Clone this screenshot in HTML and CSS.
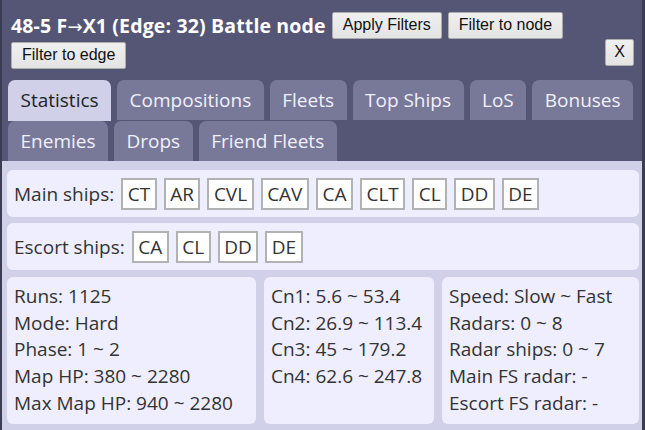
FILE: index.html
```html
<!DOCTYPE html>
<html>
<head>
<meta charset="utf-8">
<link rel="stylesheet" href="styles.css">
</head>
<body>
<div class="panel">
  <div class="header">
    <div class="row1">
      <span class="title">48-5 F<span class="arrow">→</span>X1 (Edge: 32) Battle node</span>
      <button class="btn">Apply Filters</button>
      <button class="btn">Filter to node</button>
    </div>
    <div class="row2">
      <button class="btn">Filter to edge</button>
      <button class="btn close">X</button>
    </div>
  </div>
  <div class="tabs">
    <div class="tab active">Statistics</div>
    <div class="tab">Compositions</div>
    <div class="tab">Fleets</div>
    <div class="tab">Top Ships</div>
    <div class="tab">LoS</div>
    <div class="tab">Bonuses</div>
    <div class="tab">Enemies</div>
    <div class="tab">Drops</div>
    <div class="tab">Friend Fleets</div>
  </div>
  <div class="content">
    <div class="card ships">
      <span class="label">Main ships:</span>
      <span class="ship">CT</span><span class="ship">AR</span><span class="ship">CVL</span><span class="ship">CAV</span><span class="ship">CA</span><span class="ship">CLT</span><span class="ship">CL</span><span class="ship">DD</span><span class="ship">DE</span>
    </div>
    <div class="card ships">
      <span class="label">Escort ships:</span>
      <span class="ship">CA</span><span class="ship">CL</span><span class="ship">DD</span><span class="ship">DE</span>
    </div>
    <div class="stats">
      <div class="card stat c1">
        <div>Runs: 1125</div>
        <div>Mode: Hard</div>
        <div>Phase: 1 ~ 2</div>
        <div>Map HP: 380 ~ 2280</div>
        <div>Max Map HP: 940 ~ 2280</div>
      </div>
      <div class="card stat c2">
        <div>Cn1: 5.6 ~ 53.4</div>
        <div>Cn2: 26.9 ~ 113.4</div>
        <div>Cn3: 45 ~ 179.2</div>
        <div>Cn4: 62.6 ~ 247.8</div>
      </div>
      <div class="card stat c3">
        <div>Speed: Slow ~ Fast</div>
        <div>Radars: 0 ~ 8</div>
        <div>Radar ships: 0 ~ 7</div>
        <div>Main FS radar: -</div>
        <div>Escort FS radar: -</div>
      </div>
    </div>
  </div>
</div>
</body>
</html>
```
FILE: styles.css
```css
html, body {
  margin: 0;
  padding: 0;
  background: #3c3c52;
  overflow: hidden;
}
.panel {
  margin-left: 2px;
  width: 640px;
  height: 430px;
  background: #555575;
  font-family: "Open Sans", "Noto Sans", sans-serif;
}
.header {
  padding: 12px 0 0 9px;
  width: 623px;
}
.row1 {
  display: flex;
  align-items: center;
  gap: 6px;
}
.title {
  color: #ffffff;
  font-weight: bold;
  font-size: 19.5px;
  letter-spacing: 0.15px;
}
.arrow {
  font-family: "DejaVu Sans", sans-serif;
  font-weight: normal;
  font-size: 18px;
}
.row2 {
  display: flex;
  justify-content: space-between;
  align-items: flex-start;
  margin-top: 3px;
}
.btn {
  font-family: "Liberation Sans", Arial, sans-serif;
  font-size: 16px;
  color: #111;
  background: linear-gradient(#f0f0f0, #e3e3e3);
  border: 1px solid #adadad;
  border-radius: 2px;
  padding: 3px 10px 4px;
  height: 27px;
  line-height: 18px;
}
.close {
  margin-top: -3px;
  padding: 3px 8px 4px;
}
.tabs {
  display: flex;
  flex-wrap: wrap;
  gap: 1px 6px;
  padding: 11px 0 0 6px;
  width: 630px;
}
.tab {
  background: #787898;
  color: #f0f0ff;
  font-size: 19px;
  height: 40px;
  line-height: 40px;
  padding: 0 12.5px;
  border-radius: 7px 7px 0 0;
  box-sizing: border-box;
}
.tab.active {
  background: #d0d0e8;
  color: #222;
  height: 41px;
  margin-bottom: -1px;
}
.content {
  background: #d0d0e8;
  padding: 9px 3px 6px 5px;
  display: flex;
  flex-direction: column;
  gap: 6px;
  height: 270px;
  box-sizing: border-box;
  color: #333;
  font-size: 19px;
}
.card {
  background: #eeeefe;
  border-radius: 6px;
}
.ships {
  display: flex;
  align-items: center;
  gap: 7px;
  padding: 7px 7px 7px 7px;
  height: 47px;
  box-sizing: border-box;
}
.ship {
  background: #ffffff;
  border: 2px solid #b2b2b2;
  padding: 0 4.5px;
  height: 32px;
  line-height: 28px;
  box-sizing: border-box;
}
.stats {
  display: flex;
  gap: 8px;
  margin-top: 1px;
}
.stat {
  padding: 6px 7px;
  line-height: 26.7px;
  height: 147px;
  box-sizing: border-box;
}
.c1 { width: 249px; }
.c2 { width: 170px; }
.c3 { width: 197px; }
```
